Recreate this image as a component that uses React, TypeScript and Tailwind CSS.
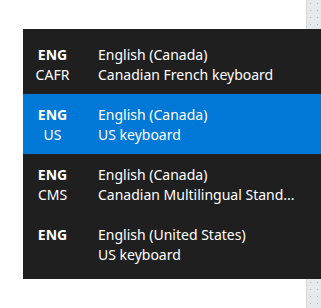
import React from "react";

type Layout = {
  code: string;
  variant?: string;
  language: string;
  keyboard: string;
  active?: boolean;
};

const layouts: Layout[] = [
  { code: "ENG", variant: "CAFR", language: "English (Canada)", keyboard: "Canadian French keyboard" },
  { code: "ENG", variant: "US", language: "English (Canada)", keyboard: "US keyboard", active: true },
  { code: "ENG", variant: "CMS", language: "English (Canada)", keyboard: "Canadian Multilingual Stand..." },
  { code: "ENG", language: "English (United States)", keyboard: "US keyboard" },
];

function Strip() {
  return (
    <div className="h-full w-[15px] border-l border-[#d4d8db] bg-[#e5e9ec] bg-[radial-gradient(#b0b4b8_0.7px,transparent_1px)] bg-[length:7px_7px]" />
  );
}

export default function App() {
  return (
    <div
      className="relative h-[308px] w-[321px] overflow-hidden bg-white"
      style={{ fontFamily: '"Segoe UI", "Noto Sans", sans-serif' }}
    >
      <div className="flex h-[29px] justify-end">
        <Strip />
      </div>
      <div className="ml-[23px] flex h-[250px] flex-col bg-[#1f1f1f] pt-[5px] text-[14px] leading-[20px] text-white">
        {layouts.map((l, i) => (
          <div
            key={i}
            className={`flex h-[60px] pt-[11px] ${l.active ? "bg-[#0078d7]" : ""}`}
          >
            <div className="flex w-[59px] flex-col items-center">
              <span className="font-bold">{l.code}</span>
              {l.variant && <span>{l.variant}</span>}
            </div>
            <div className="ml-[16px] flex flex-col whitespace-nowrap">
              <span>{l.language}</span>
              <span>{l.keyboard}</span>
            </div>
          </div>
        ))}
      </div>
      <div className="flex h-[29px] justify-end">
        <Strip />
      </div>
    </div>
  );
}
